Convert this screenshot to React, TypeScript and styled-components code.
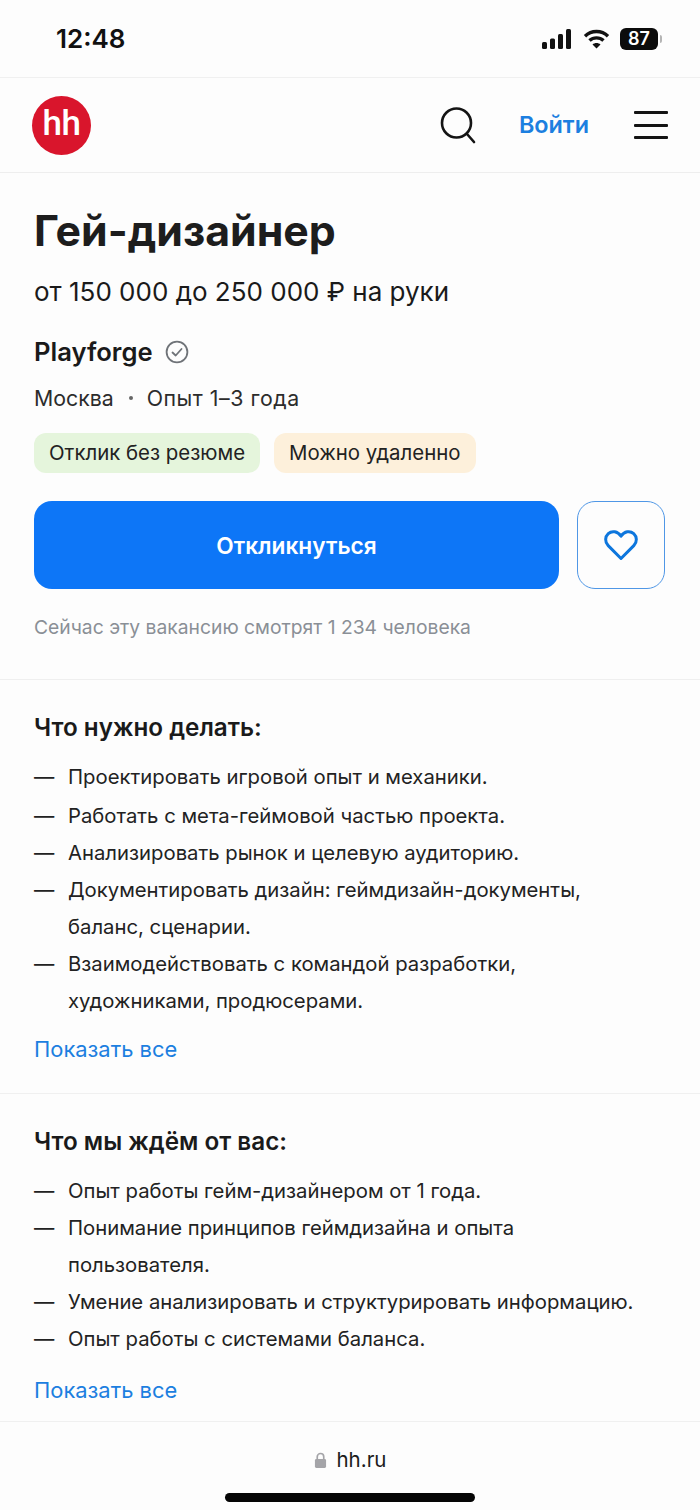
import React from "react";
import styled, { createGlobalStyle } from "styled-components";

const Global = createGlobalStyle`
  html, body { margin: 0; padding: 0; background: #fdfdfd; }
  body { font-family: Inter, "Noto Sans", sans-serif; color: #1a1a1a; }
  * { box-sizing: border-box; }
`;
const Page = styled.div`
  width: 700px; height: 1510px; overflow: hidden; background: #fdfdfd;
  display: flex; flex-direction: column;
`;
const StatusBar = styled.div`
  height: 78px; padding: 0 38px 0 56px; border-bottom: 1px solid #f0f0f0;
  display: flex; align-items: center; justify-content: space-between;
`;
const Clock = styled.span`
  font-size: 26px; font-weight: 600; color: #111; line-height: 1;
`;
const StatusIcons = styled.div`
  display: flex; align-items: center; gap: 10px;
`;
const Battery = styled.div`
  display: flex; align-items: center; gap: 2px;
`;
const BatteryBody = styled.span`
  width: 38px; height: 22px; border-radius: 6px; background: #0c0c0c; color: #fff;
  font-size: 18px; font-weight: 600; line-height: 22px; text-align: center;
`;
const BatteryCap = styled.span`
  width: 2px; height: 8px; border-radius: 0 2px 2px 0; background: #b5b5b5;
`;
const Header = styled.header`
  height: 95px; padding: 0 32px; border-bottom: 1px solid #eeeeee;
  display: flex; align-items: center;
`;
const Logo = styled.div`
  width: 59px; height: 59px; border-radius: 50%; background: #d9152c; color: #fff;
  font-family: Roboto, sans-serif; font-size: 35px; font-weight: 500; letter-spacing: -0.5px;
  display: flex; align-items: center; justify-content: center; padding-bottom: 4px;
`;
const HeaderActions = styled.div`
  margin-left: auto; display: flex; align-items: center;
`;
const Login = styled.span`
  font-size: 23.4px; font-weight: 600; color: #1c7fe0; margin: 0 45px 0 43px; line-height: 1;
`;
const Burger = styled.div`
  width: 34px; height: 28px; display: flex; flex-direction: column; justify-content: space-between;
`;
const BurgerBar = styled.span`
  display: block; height: 3px; background: #141414; border-radius: 1px;
`;
const Hero = styled.section`
  padding: 30px 34px 0; height: 507px; border-bottom: 1px solid #efefef;
  display: flex; flex-direction: column;
`;
const Title = styled.h1`
  margin: 0; font-size: 42.8px; line-height: 56px; font-weight: 700; color: #1d1d1d;
`;
const Salary = styled.div`
  margin-top: 15px; font-size: 26px; line-height: 36px; color: #1a1a1a;
`;
const CompanyRow = styled.div`
  margin-top: 23px; display: flex; align-items: center; gap: 12px; height: 38px;
`;
const Company = styled.span`
  font-size: 25.6px; font-weight: 600; color: #1a1a1a; line-height: 38px;
`;
const Meta = styled.div`
  margin-top: 10px; display: flex; align-items: center; height: 34px; font-size: 21.3px; color: #2c2c2c;
`;
const Dot = styled.span`
  width: 4px; height: 4px; border-radius: 50%; background: #666; margin: 0 14px 0 15px;
`;
const Experience = styled.span`
  letter-spacing: 0.55px;
`;
const Tags = styled.div`
  margin-top: 18px; display: flex; gap: 14px;
`;
const Tag = styled.span<{ $bg: string }>`
  height: 40px; padding: 0 15px; border-radius: 12px; background: ${(p) => p.$bg};
  font-size: 20.4px; line-height: 40px; color: #222;
`;
const Actions = styled.div`
  margin-top: 28px; display: flex; gap: 18px; padding-right: 1px;
`;
const Apply = styled.div`
  flex: 1; height: 88px; border-radius: 18px; background: #0d76f7; color: #fff;
  font-size: 22.7px; font-weight: 600; display: flex; align-items: center; justify-content: center;
`;
const Favorite = styled.div`
  width: 88px; height: 88px; border-radius: 18px; border: 1px solid #4f97e6;
  display: flex; align-items: center; justify-content: center;
`;
const Watching = styled.div`
  margin-top: 23px; font-size: 19.3px; line-height: 30px; color: #8a8f96;
`;
const Section = styled.section<{ $h: number }>`
  height: ${(p) => p.$h}px; padding: 29px 34px 0; border-bottom: 1px solid #f0f0f0;
`;
const SectionTitle = styled.h2`
  margin: 0 0 11px; font-size: 24.25px; line-height: 38px; font-weight: 600; color: #1a1a1a;
`;
const List = styled.ul<{ $leadGap: number }>`
  margin: 0; padding: 0; list-style: none;
  & > li:first-child { margin-bottom: ${(p) => p.$leadGap}px; }
`;
const Item = styled.li`
  display: flex; font-size: 20.3px; line-height: 37px; color: #222;
`;
const Dash = styled.span`
  flex: 0 0 34px; color: #222;
`;
const ShowAll = styled.div<{ $top: number }>`
  margin-top: ${(p) => p.$top}px; font-size: 21.9px; line-height: 38px; color: #1c7fe0;
`;
const Footer = styled.footer`
  flex: 1; display: flex; flex-direction: column; align-items: center;
`;
const Address = styled.div`
  margin-top: 20px; display: flex; align-items: center; gap: 10px; font-size: 20.5px; line-height: 36px; color: #1c1c1c;
`;
const HomeBar = styled.div`
  margin-top: 15px; width: 250px; height: 9px; border-radius: 5px; background: #050505;
`;

const first = [
  ["Проектировать игровой опыт и механики."],
  ["Работать с мета-геймовой частью проекта."],
  ["Анализировать рынок и целевую аудиторию."],
  ["Документировать дизайн: геймдизайн-документы,", "баланс, сценарии."],
  ["Взаимодействовать с командой разработки,", "художниками, продюсерами."],
];
const second = [
  ["Опыт работы гейм-дизайнером от 1 года."],
  ["Понимание принципов геймдизайна и опыта", "пользователя."],
  ["Умение анализировать и структурировать информацию."],
  ["Опыт работы с системами баланса."],
];

const Bullets = ({ items, leadGap }: { items: string[][]; leadGap: number }) => (
  <List $leadGap={leadGap}>
    {items.map((lines) => (
      <Item key={lines[0]}>
        <Dash>—</Dash>
        <span>
          {lines.map((l, i) => (
            <React.Fragment key={l}>
              {i > 0 && <br />}
              {l}
            </React.Fragment>
          ))}
        </span>
      </Item>
    ))}
  </List>
);

export default function App() {
  return (
    <Page>
      <Global />
      <StatusBar>
        <Clock>12:48</Clock>
        <StatusIcons>
          <svg width="32" height="22" viewBox="0 0 32 22" fill="#111">
            <rect x="1" y="14" width="5" height="7" rx="1.5" />
            <rect x="9" y="10.5" width="5" height="10.5" rx="1.5" />
            <rect x="17" y="6" width="5" height="15" rx="1.5" />
            <rect x="25" y="1" width="5" height="20" rx="1.5" />
          </svg>
          <svg width="27" height="22" viewBox="0 0 27 22" fill="none" stroke="#111" strokeWidth="3.4">
            <path d="M2 8.2C8.4 2 18.6 2 25 8.2" />
            <path d="M6.5 12.6c3.9-3.7 10.1-3.7 14 0" />
            <path d="M13.5 20.5l-4-4c2.2-2 5.8-2 8 0z" fill="#111" stroke="none" />
          </svg>
          <Battery>
            <BatteryBody>87</BatteryBody>
            <BatteryCap />
          </Battery>
        </StatusIcons>
      </StatusBar>
      <Header>
        <Logo>hh</Logo>
        <HeaderActions>
          <svg width="36" height="38" viewBox="0 0 36 38" fill="none" stroke="#141414" strokeWidth="2.6" strokeLinecap="round">
            <circle cx="16.5" cy="17" r="14.5" />
            <path d="M27 28l7 8" />
          </svg>
          <Login>Войти</Login>
          <Burger>
            <BurgerBar />
            <BurgerBar />
            <BurgerBar />
          </Burger>
        </HeaderActions>
      </Header>
      <Hero>
        <Title>Гей-дизайнер</Title>
        <Salary>от 150 000 до 250 000 ₽ на руки</Salary>
        <CompanyRow>
          <Company>Playforge</Company>
          <svg width="24" height="24" viewBox="0 0 24 24" fill="none" stroke="#6f7378" strokeWidth="1.8" strokeLinecap="round" strokeLinejoin="round">
            <circle cx="12" cy="12" r="10.4" />
            <path d="M7.5 12.5l3.2 3 5.8-6.5" />
          </svg>
        </CompanyRow>
        <Meta>
          Москва<Dot /><Experience>Опыт 1–3 года</Experience>
        </Meta>
        <Tags>
          <Tag $bg="#e5f5dc">Отклик без резюме</Tag>
          <Tag $bg="#fdf0db">Можно удаленно</Tag>
        </Tags>
        <Actions>
          <Apply>Откликнуться</Apply>
          <Favorite>
            <svg width="34" height="32" viewBox="0 0 34 32" fill="none" stroke="#0d76dd" strokeWidth="3" strokeLinejoin="round">
              <path d="M17 29.5L4.2 16.6C.6 12.9 1 7.6 4.3 4.6c3.6-3.2 9.3-2.4 12.700 2.6 3.4-5 9.1-5.8 12.7-2.6 3.3 3 3.7 8.3.1 12L17 29.5z" />
            </svg>
          </Favorite>
        </Actions>
        <Watching>Сейчас эту вакансию смотрят 1 234 человека</Watching>
      </Hero>
      <Section $h={414}>
        <SectionTitle>Что нужно делать:</SectionTitle>
        <Bullets items={first} leadGap={2} />
        <ShowAll $top={11}>Показать все</ShowAll>
      </Section>
      <Section $h={328}>
        <SectionTitle>Что мы ждём от вас:</SectionTitle>
        <Bullets items={second} leadGap={0} />
        <ShowAll $top={14}>Показать все</ShowAll>
      </Section>
      <Footer>
        <Address>
          <svg width="13" height="17" viewBox="0 0 14 18" fill="#a4a4a8">
            <path d="M3.5 8V5a3.5 3.5 0 017 0v3" fill="none" stroke="#a4a4a8" strokeWidth="1.8" />
            <rect x="1" y="7.5" width="12" height="9.5" rx="1.5" />
          </svg>
          hh.ru
        </Address>
        <HomeBar />
      </Footer>
    </Page>
  );
}
